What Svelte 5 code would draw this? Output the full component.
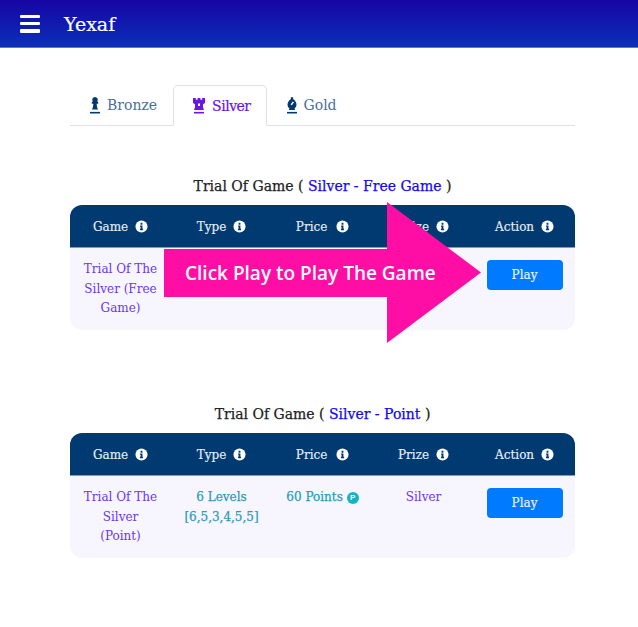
<script>
	const tabs = [
		{ name: 'Bronze', icon: 'pawn', box: '2 0 10 17' },
		{ name: 'Silver', icon: 'rook', box: '1 0 12 17', active: true },
		{ name: 'Gold', icon: 'bishop', box: '2 0 10 17' }
	];

	const columns = ['Game', 'Type', 'Price', 'Prize', 'Action'];

	// the first row sits under the callout, only its name and button show
	const games = [
		{ title: 'Silver - Free Game', name: ['Trial Of The', 'Silver (Free', 'Game)'] },
		{
			title: 'Silver - Point',
			name: ['Trial Of The', 'Silver', '(Point)'],
			levels: ['6 Levels', '[6,5,3,4,5,5]'],
			price: '60 Points',
			prize: 'Silver'
		}
	];
</script>

<div class="page">
	<header class="topbar">
		<button class="burger" aria-label="Menu"><span></span><span></span><span></span></button>
		<span class="brand">Yexaf</span>
	</header>

	<main class="content">
		<nav class="tabs">
			{#each tabs as tab}
				<div class="tab" class:active={tab.active}>
					<svg class="chess {tab.icon}" viewBox={tab.box} aria-hidden="true">
						{#if tab.icon === 'pawn'}
							<path d="M7 0a2.800 2.800 0 0 1 2.200 4.500l1 0.500v1.700H8.700c0 1.800 0.300 3.700 1.300 5.800H4c1-2.100 1.300-4 1.300-5.800H3.800V5l1-0.500A2.800 2.800 0 0 1 7 0Z" />
						{:else if tab.icon === 'rook'}
							<path d="M1 1h2.800v1.800h1.800V1h2.800v1.800h1.800V1H13v5l-2 1.300v3L12 13H2l1-2.700v-3L1 6Z" />
							<path class="cut" d="M6 6.500h2v2.500H6Z" />
						{:else}
							<path d="M7 0a1.300 1.300 0 0 1 1 2.100C10 3.400 11.500 5.500 11.500 7.500c0 1.900-0.900 3.200-2 3.900l0.800 1.600H3.700l0.800-1.600c-1.100-0.700-2-2-2-3.900 0-2 1.500-4.100 3.500-5.400A1.300 1.300 0 0 1 7 0Z" />
							<path class="cut" d="M7.800 4.400l1.200 0.900-2.200 3-1.200-0.900Z" />
						{/if}
						<path d="M2 14.900h10v1.600H2Z" />
					</svg>
					<span>{tab.name}</span>
				</div>
			{/each}
		</nav>

		{#each games as game, i}
			<section class="game">
				<h2>Trial Of Game ( <span class="hl">{game.title}</span> )</h2>
				<table>
					<thead>
						<tr>
							{#each columns as col}
								<th>
									{col}
									<svg class="info" viewBox="0 0 14 14" aria-hidden="true">
										<circle cx="7" cy="7" r="6.500" fill="#fff" />
										<path d="M6 3h2v2H6Z M5.500 6h2.500v3.500h0.700V11H5.300V9.500H6V7.400h-0.500Z" fill="#003a70" />
									</svg>
								</th>
							{/each}
						</tr>
					</thead>
					<tbody>
						<tr>
							<td class="violet">
								{#each game.name as line}<div>{line}</div>{/each}
							</td>
							<td class="teal">
								{#each game.levels ?? [] as line}<div>{line}</div>{/each}
							</td>
							<td class="teal">
								{#if game.price}
									{game.price}
									<span class="coin">P</span>
								{/if}
							</td>
							<td class="violet">{game.prize ?? ''}</td>
							<td><button class="play">Play</button></td>
						</tr>
					</tbody>
				</table>

				{#if i === 0}
					<div class="callout">
						<span class="shaft">Click Play to Play The Game</span>
						<svg class="head" viewBox="0 0 94 141" aria-hidden="true"><path d="M0 0L94 70.500L0 141Z" /></svg>
					</div>
				{/if}
			</section>
		{/each}
	</main>
</div>

<style>
	:global(body) {
		margin: 0;
		background: #fff;
	}

	.page {
		font-family: 'DejaVu Serif', serif;
		width: 638px;
		height: 627px;
		overflow: hidden;
	}

	.topbar {
		height: 47px;
		display: flex;
		align-items: center;
		padding-left: 20px;
		gap: 24px;
		background: linear-gradient(180deg, #1705a3, #0a30b9);
		border-bottom: 1px solid #5a78d8;
	}

	.burger {
		width: 20px;
		height: 18px;
		padding: 0;
		border: 0;
		background: none;
		display: flex;
		flex-direction: column;
		justify-content: space-between;
	}

	.burger span {
		height: 3.500px;
		border-radius: 1px;
		background: #fff;
	}

	.brand {
		color: #fff;
		font-size: 19px;
		-webkit-text-stroke: 0.2px;
	}

	.content {
		width: 505px;
		margin-left: 70px;
	}

	.tabs {
		margin-top: 37px;
		height: 40px;
		display: flex;
		border-bottom: 1px solid #dee2e6;
	}

	.tab {
		height: 40px;
		display: flex;
		align-items: center;
		gap: 7px;
		padding: 0 15px 0 19px;
		font-size: 14px;
		color: #4a7099;
		border: 1px solid transparent;
		border-radius: 5px 5px 0 0;
		box-sizing: border-box;
	}

	.tab.active {
		color: #6a14e6;
		background: #fff;
		border-color: #dee2e6 #dee2e6 #fff;
		height: 41px;
		letter-spacing: -0.5px;
		-webkit-text-stroke: 0.2px;
	}

	.chess {
		width: 10px;
		height: 17px;
		fill: #003a70;
	}

	.chess.rook {
		width: 12px;
	}

	.active .chess {
		fill: #6a14e6;
	}

	.cut {
		fill: #fff;
	}

	.game {
		position: relative;
		margin-top: 50px;
		height: 153px;
	}

	.game:nth-of-type(1) {
		height: 178px;
	}

	h2 {
		margin: 0;
		height: 29px;
		font-size: 14px;
		font-weight: 400;
		line-height: 20px;
		text-align: center;
		color: #222;
		-webkit-text-stroke: 0.25px;
	}

	.hl {
		color: #1408f0;
	}

	table {
		width: 505px;
		table-layout: fixed;
		border-collapse: separate;
		border-spacing: 0;
		font-size: 12px;
	}

	th {
		height: 41px;
		padding: 1px 0 0;
		background: #003a70;
		color: #e8eef5;
		font-weight: 400;
		border-bottom: 1px solid #7f9bb8;
		-webkit-text-stroke: 0.15px;
	}

	th:first-child {
		border-top-left-radius: 12px;
	}

	th:last-child {
		border-top-right-radius: 12px;
	}

	th:nth-child(3) .info {
		margin-left: 5px;
	}

	.info {
		width: 13px;
		height: 13px;
		margin-left: 3px;
		vertical-align: -2px;
	}

	td {
		height: 82px;
		padding: 12px 0 0;
		box-sizing: border-box;
		background: #f7f6ff;
		text-align: center;
		vertical-align: top;
		line-height: 19.500px;
	}

	td:first-child {
		border-bottom-left-radius: 12px;
	}

	td:last-child {
		border-bottom-right-radius: 12px;
		padding-top: 12px;
	}

	.violet {
		color: #6a35ee;
	}

	.teal {
		color: #2a9bb8;
		-webkit-text-stroke: 0.25px;
	}

	.coin {
		display: inline-block;
		width: 12px;
		height: 12px;
		border-radius: 50%;
		background: #12b5c8;
		color: #fff;
		font: 700 8px/12px 'Liberation Sans', sans-serif;
		vertical-align: 1px;
		-webkit-text-stroke: 0;
	}

	.play {
		width: 76px;
		height: 30px;
		border: 0;
		padding: 0;
		border-radius: 4px;
		background: #007bff;
		color: #e8f2ff;
		font: 400 12px 'DejaVu Serif', serif;
		-webkit-text-stroke: 0.2px;
	}

	.callout {
		position: absolute;
		left: 94px;
		top: 26px;
		display: flex;
		align-items: center;
		height: 141px;
	}

	.shaft {
		position: relative;
		z-index: 1;
		box-sizing: border-box;
		width: 223px;
		height: 48px;
		padding-left: 21px;
		background: #ff0ea6;
		color: #fff;
		font: 600 19px/48px 'Open Sans', sans-serif;
		white-space: nowrap;
	}

	.head {
		width: 94px;
		height: 141px;
		fill: #ff0ea6;
	}
</style>
